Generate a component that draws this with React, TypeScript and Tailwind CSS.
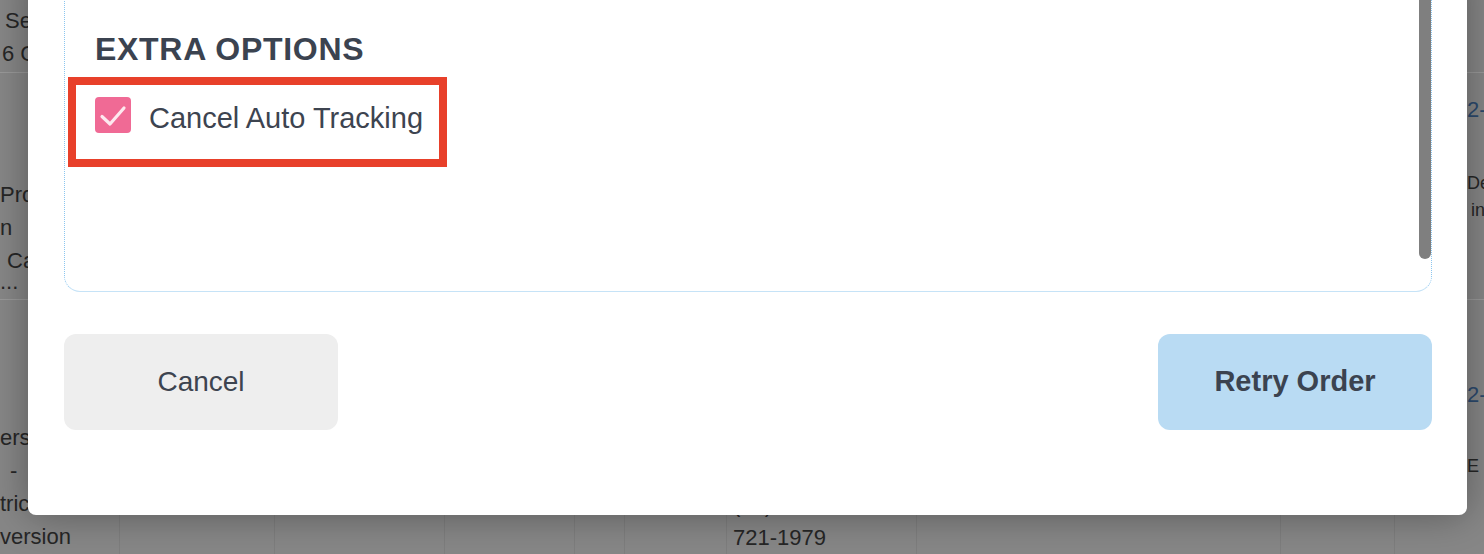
const cols = "grid-cols-[120px_155px_170px_130px_50px_102px_190px_364px_114px_89px]";

function Cell({ children, className = "" }: { children?: React.ReactNode; className?: string }) {
  return (
    <div className={`overflow-hidden border-r border-[#7e7e7e] text-[22px] leading-[33px] text-[#262626] ${className}`}>
      {children}
    </div>
  );
}

function BackgroundTable() {
  return (
    <div className="h-full w-full bg-[#878787] font-['Liberation_Sans',sans-serif]">
      <div className={`grid ${cols} h-[73px] border-b border-[#9a9a9a]`}>
        <Cell className="pt-[4px] pl-[5px]">
          <div>Se</div>
          <div className="-ml-[3px]">6 C</div>
        </Cell>
        <Cell /><Cell /><Cell /><Cell /><Cell /><Cell /><Cell /><Cell />
        <Cell className="border-r-0" />
      </div>
      <div className={`grid ${cols} h-[227px] border-b border-[#9a9a9a]`}>
        <Cell className="pt-[105px]">
          <div>Prot</div>
          <div>n</div>
          <div className="pl-[7px]">Ca</div>
          <div className="-mt-[12px]">...</div>
        </Cell>
        <Cell /><Cell /><Cell /><Cell /><Cell /><Cell /><Cell /><Cell />
        <Cell className="border-r-0 pt-[20px] pl-[72px]">
          <div className="text-[#2c4a6e]">2-</div>
          <div className="mt-[44px] text-[18px] leading-[27px]">De</div>
          <div className="pl-[4px] text-[18px] leading-[27px]">in</div>
        </Cell>
      </div>
      <div className={`grid ${cols} h-[254px]`}>
        <Cell className="pt-[121px]">
          <div>ers</div>
          <div className="pl-[10px]">-</div>
          <div>tric</div>
          <div>version</div>
        </Cell>
        <Cell /><Cell /><Cell /><Cell /><Cell />
        <Cell className="pt-[188px] pl-[6px]">
          <div>(&nbsp;&nbsp;&nbsp;&nbsp;)</div>
          <div>721-1979</div>
        </Cell>
        <Cell /><Cell />
        <Cell className="border-r-0 pt-[78px] pl-[72px]">
          <div className="text-[#2c4a6e]">2-</div>
          <div className="mt-[42px] text-[18px] leading-[27px]">E</div>
        </Cell>
      </div>
    </div>
  );
}

function CheckIcon() {
  return (
    <svg width="36" height="36" viewBox="0 0 36 36" fill="none">
      <polyline
        points="7,19.5 15,27 29,11"
        stroke="#fde9ef"
        strokeWidth="3.2"
        strokeLinecap="round"
        strokeLinejoin="round"
      />
    </svg>
  );
}

export default function App() {
  return (
    <div className="relative h-[554px] w-[1484px] overflow-hidden font-['Liberation_Sans',sans-serif]">
      <BackgroundTable />

      <div className="absolute left-[28px] top-[-40px] flex h-[555px] w-[1439px] flex-col rounded-lg bg-white pl-[36px] pr-[35px] shadow-[0_0_40px_rgba(0,0,0,0.35)]">
        <div className="relative h-[332px] rounded-b-2xl border border-dotted border-[#8cc6ef] border-b-[#c6e3f7] [border-bottom-style:solid] pl-[30px] pt-[68px]">
          <h2 className="text-[32px] font-semibold leading-[40px] tracking-[0.7px] text-[#3b4350]">EXTRA OPTIONS</h2>
          <div className="mt-[8px] -ml-[27px] h-[90px] w-[379px] border-8 border-[#e8402a] pl-[19px] pt-[12px]">
            <label className="flex items-start gap-[18px]">
              <span className="flex h-[36px] w-[36px] items-center justify-center rounded-[4px] bg-[#f06a95]">
                <CheckIcon />
              </span>
              <span className="pt-[3px] text-[29px] leading-[36px] text-[#3d4450]">Cancel Auto Tracking</span>
            </label>
          </div>
          <div className="absolute right-0 top-0 h-[298px] w-[12px] rounded-b-full bg-[#7f7f7f]" />
        </div>

        <div className="mt-[42px] flex justify-between">
          <button className="h-[96px] w-[274px] rounded-xl bg-[#eeeeee] text-[28px] text-[#3d4450]">Cancel</button>
          <button className="h-[96px] w-[274px] rounded-xl bg-[#b9dbf3] text-[29px] font-bold text-[#3b4350]">Retry Order</button>
        </div>
      </div>
    </div>
  );
}
